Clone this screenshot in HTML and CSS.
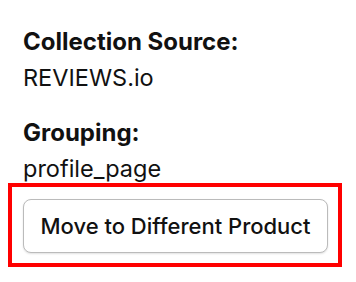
FILE: index.html
```html
<!DOCTYPE html>
<html lang="en">
    <head>
        <meta charset="utf-8">
        <meta name="viewport" content="width=device-width, initial-scale=1.0">
        <title>Review details</title>

        <link rel="stylesheet" href="styles.css">
    </head>
    <body>
        <main class="details">
            <div class="field">
                <div class="field-label">Collection Source:</div>
                <div class="field-value">REVIEWS.io</div>
            </div>
            <div class="field">
                <div class="field-label">Grouping:</div>
                <div class="field-value">profile_page</div>
            </div>
            <div class="action">
                <button type="button" class="move-btn">Move to Different Product</button>
                <span class="highlight"></span>
            </div>
        </main>
    </body>
</html>
```

FILE: styles.css
```css
body {
    margin: 0;
    font-family: Inter, "Noto Sans", sans-serif;
    color: #111;
    background: #fff;
}
.details {
    display: flex;
    flex-direction: column;
    align-items: flex-start;
    gap: 12px;
    padding: 24px 23px;
}
.field {
    display: flex;
    flex-direction: column;
}
.field + .field {
    margin-top: 7px;
}
.field-label {
    font-size: 24px;
    line-height: 36px;
    font-weight: 700;
}
.field-value {
    font-size: 23.5px;
    line-height: 36px;
}
.action {
    position: relative;
}
.move-btn {
    font-family: inherit;
    font-size: 22px;
    font-weight: 500;
    color: #111;
    background: #fff;
    border: 1px solid #bbb;
    border-radius: 8px;
    box-shadow: 0 1px 2px rgba(0, 0, 0, 0.12);
    padding: 0;
    height: 54px;
    width: 305px;
    white-space: nowrap;
}
.highlight {
    position: absolute;
    top: -16px;
    left: -15px;
    right: -14px;
    bottom: -14px;
    border: 4px solid #f00;
}
```
